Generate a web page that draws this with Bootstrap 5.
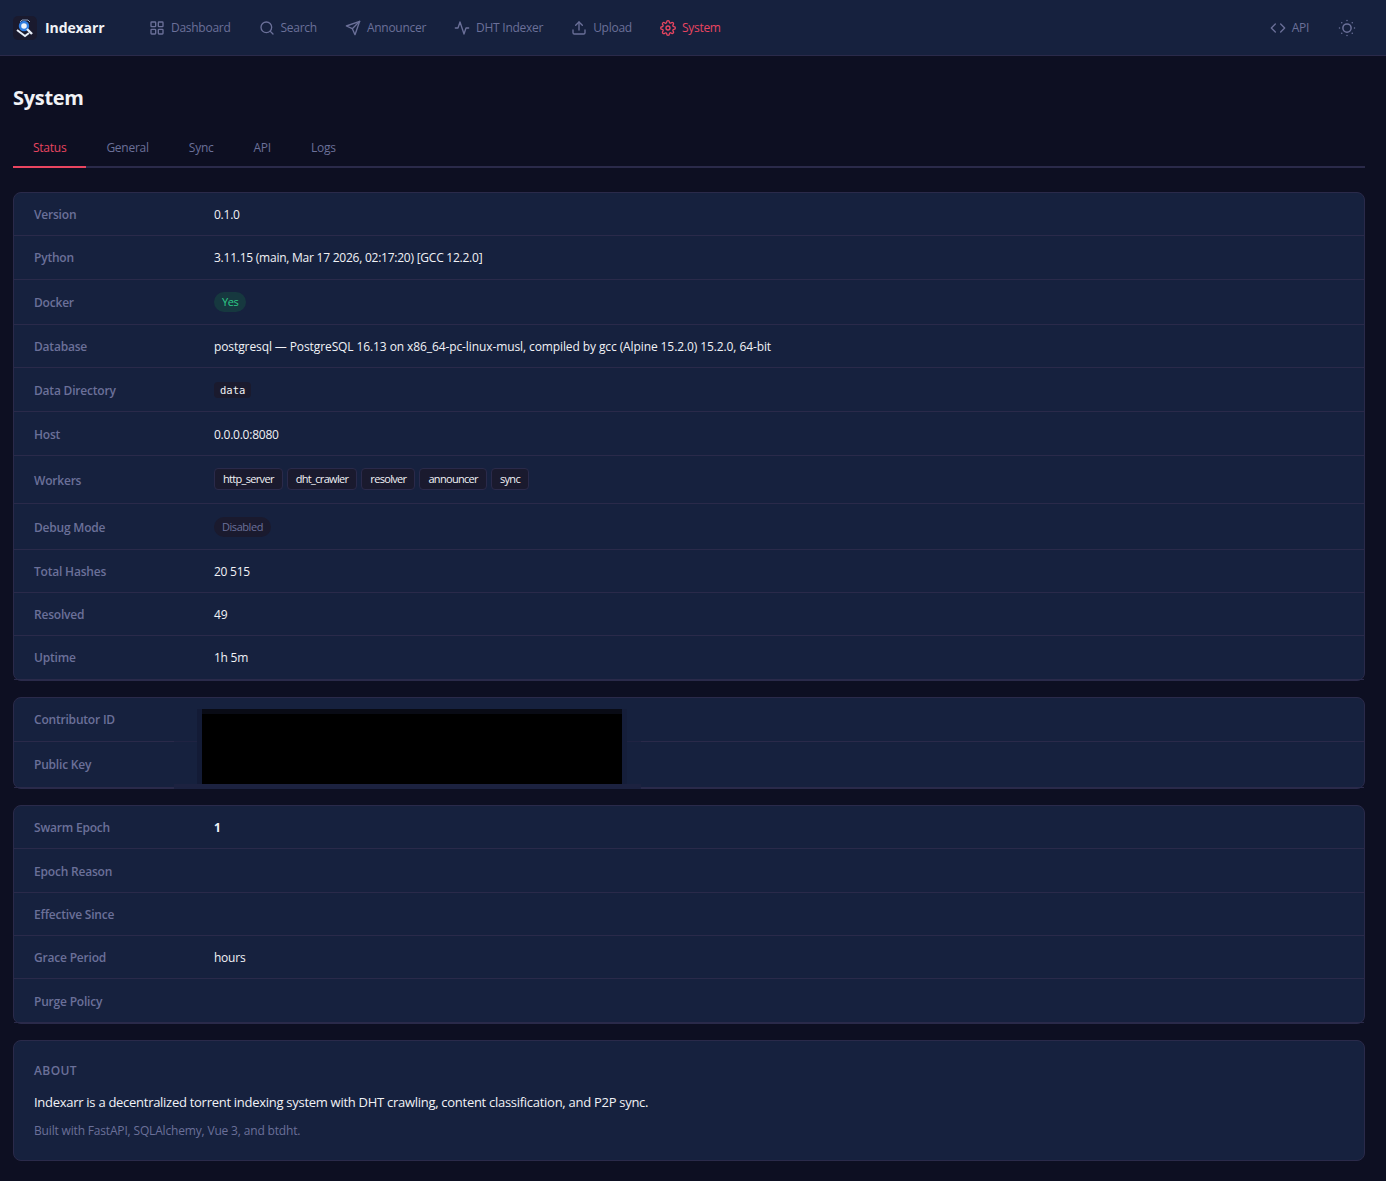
<!DOCTYPE html>
<html lang="en">
<head>
<meta charset="utf-8">
<title>Indexarr</title>
<link href="https://cdn.jsdelivr.net/npm/bootstrap@5.3.0/dist/css/bootstrap.min.css" rel="stylesheet">
<style>
body{background:#0d0f22;font-family:"Open Sans","Noto Sans",sans-serif;font-size:12px;letter-spacing:-.1px;color:#fff;}
.topbar{height:56px;background:#16213e;border-bottom:1px solid #2a2a4a;padding:0 13px;}
.brand{font-weight:700;font-size:14px;color:#f1f2f6;text-decoration:none;width:122px;gap:8px;}
.logo-box{width:24px;height:24px;background:#1a1a2e;border-radius:5px;}
.toplink{color:#6b7099;text-decoration:none;padding:0 14px;gap:6px;letter-spacing:-.27px;}
.toplink.on{color:#e94560;}
.toplink svg,.theme-btn svg{fill:none;stroke:currentColor;stroke-width:2;stroke-linecap:round;stroke-linejoin:round;flex:none;}
.theme-btn{color:#6b7099;background:none;border:0;padding:0;margin-left:15px;margin-right:17px;}
.pagebox{padding:24px 21px 20px 13px;}
.pagetitle{font-size:20px;font-weight:700;line-height:36px;margin:0 0 13px;color:#f1f2f6;letter-spacing:-.3px;}
.tabbar{border-bottom:2px solid #2a2a4a;margin-bottom:24px;}
.tabitem{color:#6b7099;text-decoration:none;padding:0 20px;height:39px;line-height:38px;margin-bottom:-2px;border-bottom:2px solid transparent;letter-spacing:-.25px;}
.tabitem.on{color:#e94560;border-bottom-color:#e94560;}
.infocard{background:#16213e;border:1px solid #2a2a4a;border-radius:8px;margin-bottom:16px;position:relative;}
.inforow{display:flex;align-items:center;border-bottom:1px solid #2a2a4a;padding:1px 20px 0;height:44px;}
.inforow.lower{padding-top:3px;}
.h43{height:43px;}.h45{height:45px;}.h46{height:46px;}.h48{height:48px;}
.infolabel{width:180px;flex:none;color:#6b7099;font-weight:600;letter-spacing:-.2px;}
.infolabel.lower{padding-top:2px;}
.infoval{color:#f1f2f6;}
.numval{letter-spacing:-.24px;}
.pill{display:inline-block;font-size:11px;line-height:14px;padding:3px 8px;border-radius:10px;letter-spacing:-.45px;margin-top:-1px;vertical-align:top;}
.pill-ok{background:#16383f;color:#2ecc87;}
.pill-off{background:#1a1a2e;color:#6b7099;}
.codechip{font-family:"DejaVu Sans Mono","Liberation Mono",monospace;font-size:10.5px;background:#1a1a2e;color:#f1f2f6;padding:2px 6px;border-radius:4px;line-height:13px;letter-spacing:0;}
.workchip{font-size:11px;background:#1a1a2e;border:1px solid #2a2a4a;color:#f1f2f6;border-radius:4px;padding:0 8px;height:22px;line-height:20px;letter-spacing:-.68px;margin-top:-2px;}
.redact{position:absolute;}
.redact-line{left:160px;top:43px;width:467px;height:1px;background:#1f2342;}
.redact-foot{left:160px;top:86px;width:467px;height:5px;background:#1c2240;}
.redact-left{left:183px;top:11px;width:5px;height:75px;background:#131b36;}
.redact-right{left:608px;top:11px;width:5px;height:75px;background:#151e3a;}
.redact-top{left:188px;top:11px;width:420px;height:5px;background:#090b15;}
.redact-black{left:188px;top:16px;width:420px;height:70px;background:#000;}
.aboutcard{background:#16213e;border:1px solid #2a2a4a;border-radius:8px;padding:20px;height:121px;}
.abouthead{font-weight:600;letter-spacing:.4px;color:#6b7099;line-height:20px;margin-bottom:11px;}
.aboutmain{color:#f1f2f6;font-size:13px;letter-spacing:-.28px;line-height:20px;margin-bottom:9px;}
.aboutsub{color:#6b7099;letter-spacing:-.17px;line-height:20px;}
</style>
</head>
<body>
<nav class="topbar d-flex align-items-center">
  <a class="brand d-flex align-items-center" href="#">
    <span class="logo-box d-flex">
      <svg width="24" height="24" viewBox="0 0 24 24" fill="none"><path d="M7 6l2-2h6l2 2" stroke="#8fa6c8" stroke-width="1"/><path d="M4 14l8 6 4-3" stroke="#e8eef8" stroke-width="2"/><circle cx="11" cy="10" r="4" stroke="#2f7de1" stroke-width="2.4" fill="#eef3fb"/><path d="M14 13l5 5" stroke="#e8eef8" stroke-width="2.4"/></svg>
    </span>
    <span>Indexarr</span>
  </a>
  <a class="toplink d-flex align-items-center" href="#"><svg width="16" height="16" viewBox="0 0 24 24"><rect x="3" y="3" width="7" height="7" rx="1"/><rect x="14" y="3" width="7" height="7" rx="1"/><rect x="3" y="14" width="7" height="7" rx="1"/><rect x="14" y="14" width="7" height="7" rx="1"/></svg>Dashboard</a>
  <a class="toplink d-flex align-items-center" href="#"><svg width="16" height="16" viewBox="0 0 24 24"><circle cx="11" cy="11" r="8"/><path d="M21 21l-4.3-4.3"/></svg>Search</a>
  <a class="toplink d-flex align-items-center" href="#"><svg width="16" height="16" viewBox="0 0 24 24"><path d="M22 2L11 13"/><path d="M22 2l-7 20-4-9-9-4z"/></svg>Announcer</a>
  <a class="toplink d-flex align-items-center" href="#"><svg width="16" height="16" viewBox="0 0 24 24"><path d="M22 12h-4l-3 9L9 3l-3 9H2"/></svg>DHT Indexer</a>
  <a class="toplink d-flex align-items-center" href="#"><svg width="16" height="16" viewBox="0 0 24 24"><path d="M21 15v4a2 2 0 0 1-2 2H5a2 2 0 0 1-2-2v-4"/><path d="M17 8l-5-5-5 5"/><path d="M12 3v12"/></svg>Upload</a>
  <a class="toplink on d-flex align-items-center" href="#"><svg width="16" height="16" viewBox="0 0 24 24"><circle cx="12" cy="12" r="3"/><path d="M19.4 15a1.65 1.65 0 0 0 .33 1.82l.06.06a2 2 0 1 1-2.83 2.83l-.06-.06a1.65 1.65 0 0 0-1.82-.33 1.65 1.65 0 0 0-1 1.51V21a2 2 0 0 1-4 0v-.09A1.65 1.65 0 0 0 9 19.4a1.65 1.65 0 0 0-1.82.33l-.06.06a2 2 0 1 1-2.83-2.83l.06-.06a1.65 1.65 0 0 0 .33-1.82 1.65 1.65 0 0 0-1.51-1H3a2 2 0 0 1 0-4h.09A1.65 1.65 0 0 0 4.6 9a1.65 1.65 0 0 0-.33-1.82l-.06-.06a2 2 0 1 1 2.83-2.83l.06.06a1.65 1.65 0 0 0 1.82.33H9a1.65 1.65 0 0 0 1-1.51V3a2 2 0 0 1 4 0v.09a1.65 1.65 0 0 0 1 1.51 1.65 1.65 0 0 0 1.82-.33l.06-.06a2 2 0 1 1 2.83 2.83l-.06.06a1.65 1.65 0 0 0-.33 1.82V9a1.65 1.65 0 0 0 1.51 1H21a2 2 0 0 1 0 4h-.09a1.65 1.65 0 0 0-1.51 1z"/></svg>System</a>
  <a class="toplink d-flex align-items-center ms-auto" href="#"><svg width="16" height="16" viewBox="0 0 24 24"><path d="M16 18l6-6-6-6"/><path d="M8 6l-6 6 6 6"/></svg>API</a>
  <button class="theme-btn d-flex" type="button" aria-label="Theme"><svg width="18" height="18" viewBox="0 0 24 24"><circle cx="12" cy="12" r="5.5"/><path d="M12 2h.01M12 22h.01M2 12h.01M22 12h.01M5 5h.01M19 5h.01M5 19h.01M19 19h.01"/></svg></button>
</nav>
<main class="pagebox">
  <h1 class="pagetitle">System</h1>
  <div class="tabbar d-flex">
    <a class="tabitem on" href="#">Status</a>
    <a class="tabitem" href="#">General</a>
    <a class="tabitem" href="#">Sync</a>
    <a class="tabitem" href="#">API</a>
    <a class="tabitem" href="#">Logs</a>
  </div>
  <section class="infocard">
    <div class="inforow h43"><div class="infolabel">Version</div><div class="infoval numval">0.1.0</div></div>
    <div class="inforow"><div class="infolabel">Python</div><div class="infoval numval">3.11.15 (main, Mar 17 2026, 02:17:20) [GCC 12.2.0]</div></div>
    <div class="inforow h45"><div class="infolabel">Docker</div><div class="infoval"><span class="pill pill-ok">Yes</span></div></div>
    <div class="inforow h43"><div class="infolabel">Database</div><div class="infoval">postgresql — PostgreSQL 16.13 on x86_64-pc-linux-musl, compiled by gcc (Alpine 15.2.0) 15.2.0, 64-bit</div></div>
    <div class="inforow"><div class="infolabel lower">Data Directory</div><div class="infoval"><code class="codechip">data</code></div></div>
    <div class="inforow lower"><div class="infolabel">Host</div><div class="infoval numval">0.0.0.0:8080</div></div>
    <div class="inforow h48"><div class="infolabel lower">Workers</div><div class="infoval d-flex gap-1"><span class="workchip">http_server</span><span class="workchip">dht_crawler</span><span class="workchip">resolver</span><span class="workchip">announcer</span><span class="workchip">sync</span></div></div>
    <div class="inforow h46"><div class="infolabel lower">Debug Mode</div><div class="infoval"><span class="pill pill-off">Disabled</span></div></div>
    <div class="inforow h43"><div class="infolabel">Total Hashes</div><div class="infoval numval">20 515</div></div>
    <div class="inforow h43"><div class="infolabel">Resolved</div><div class="infoval">49</div></div>
    <div class="inforow"><div class="infolabel">Uptime</div><div class="infoval numval">1h 5m</div></div>
  </section>
  <section class="infocard">
    <div class="inforow"><div class="infolabel">Contributor ID</div></div>
    <div class="inforow h46"><div class="infolabel">Public Key</div></div>
    <div class="redact redact-line"></div>
    <div class="redact redact-foot"></div>
    <div class="redact redact-left"></div>
    <div class="redact redact-right"></div>
    <div class="redact redact-top"></div>
    <div class="redact redact-black"></div>
  </section>
  <section class="infocard">
    <div class="inforow h43"><div class="infolabel">Swarm Epoch</div><div class="infoval fw-bold">1</div></div>
    <div class="inforow lower"><div class="infolabel">Epoch Reason</div></div>
    <div class="inforow h43"><div class="infolabel">Effective Since</div></div>
    <div class="inforow h43"><div class="infolabel">Grace Period</div><div class="infoval numval">hours</div></div>
    <div class="inforow lower"><div class="infolabel">Purge Policy</div></div>
  </section>
  <section class="aboutcard">
    <div class="abouthead">ABOUT</div>
    <div class="aboutmain">Indexarr is a decentralized torrent indexing system with DHT crawling, content classification, and P2P sync.</div>
    <div class="aboutsub">Built with FastAPI, SQLAlchemy, Vue 3, and btdht.</div>
  </section>
</main>
<script src="https://cdn.jsdelivr.net/npm/bootstrap@5.3.0/dist/js/bootstrap.bundle.min.js"></script>
</body>
</html>
